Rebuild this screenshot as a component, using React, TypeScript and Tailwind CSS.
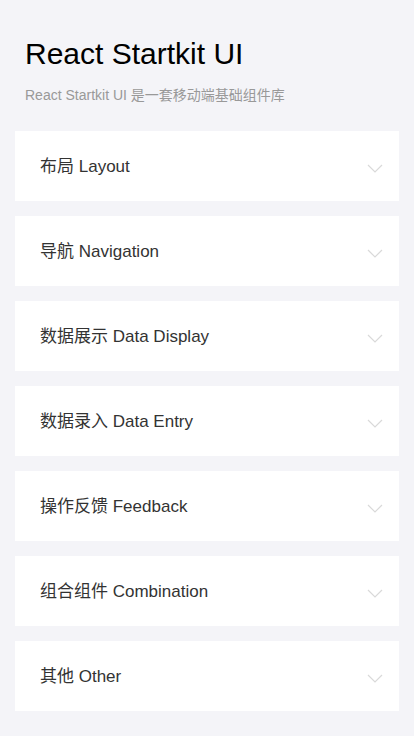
import React from "react";

const groups = [
  "布局 Layout",
  "导航 Navigation",
  "数据展示 Data Display",
  "数据录入 Data Entry",
  "操作反馈 Feedback",
  "组合组件 Combination",
  "其他 Other",
];

const Chevron: React.FC = () => (
  <svg width="16" height="9" viewBox="0 0 16 9" fill="none" className="mt-[4px] shrink-0">
    <path d="M1 1l7 7 7-7" stroke="#d9d9d9" strokeWidth="1.2" />
  </svg>
);

export default function App() {
  return (
    <div
      className="min-h-[736px] bg-[#f4f4f8] px-[15px] pb-6"
      style={{ fontFamily: '"Liberation Sans", Arial, "Noto Sans CJK SC", sans-serif' }}
    >
      <div className="px-[10px] pt-[34px] pb-[26px]">
        <h1 className="text-[30px] leading-[40px] text-black">React Startkit UI</h1>
        <p className="mt-[11px] text-[14px] leading-[20px] text-[#999]">
          React Startkit UI 是一套移动端基础组件库
        </p>
      </div>
      <div className="flex flex-col gap-[15px]">
        {groups.map((g) => (
          <div key={g} className="flex h-[70px] items-center justify-between bg-white pl-[25px] pr-[16px]">
            <span className="pt-[2px] text-[17px] text-[#333]">{g}</span>
            <Chevron />
          </div>
        ))}
      </div>
    </div>
  );
}
